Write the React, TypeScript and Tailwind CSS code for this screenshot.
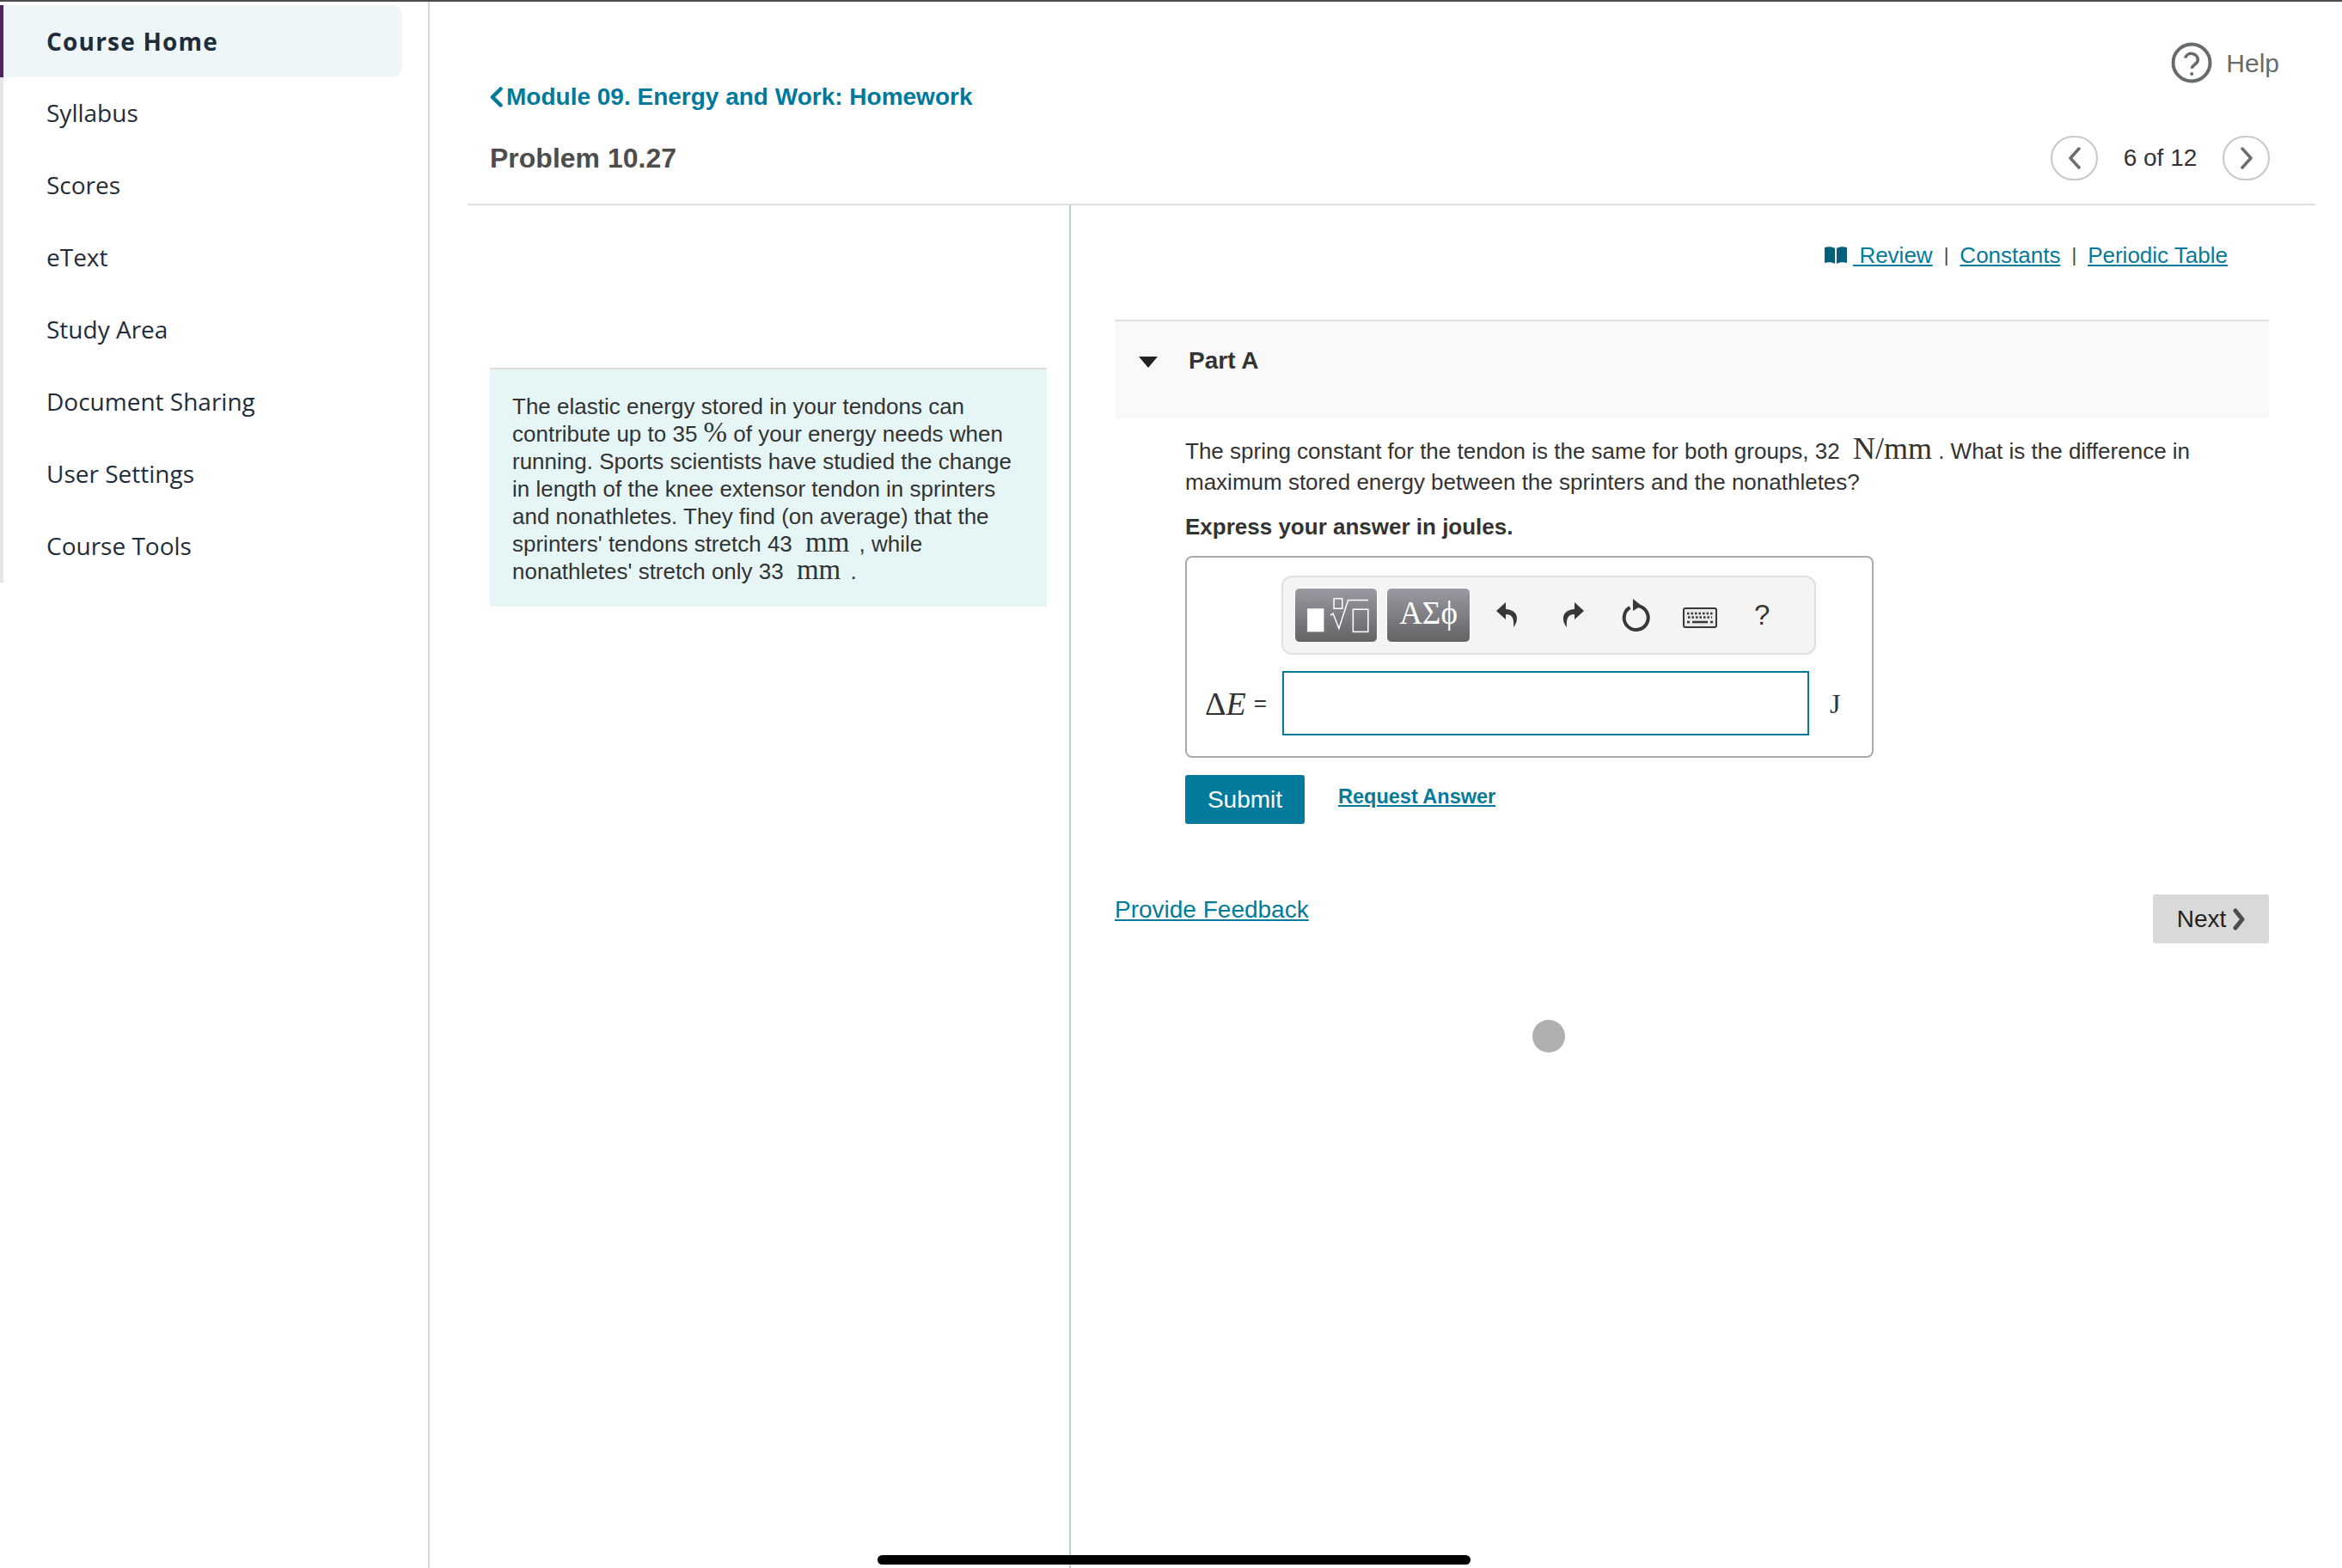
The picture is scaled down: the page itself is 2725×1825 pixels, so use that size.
const navItems = [
  "Syllabus",
  "Scores",
  "eText",
  "Study Area",
  "Document Sharing",
  "User Settings",
  "Course Tools",
];

function Mathy({ children, className = "" }: { children: React.ReactNode; className?: string }) {
  return <span className={`font-['Liberation_Serif',serif] leading-[0] ${className}`}>{children}</span>;
}

function Chevron({ dir }: { dir: "left" | "right" }) {
  return (
    <svg width="18" height="26" viewBox="0 0 18 26" fill="none" stroke="#6a6e70" strokeWidth="3.5" strokeLinecap="round" strokeLinejoin="round">
      <path d={dir === "left" ? "M14 2 4 13l10 11" : "M4 2l10 11L4 24"} />
    </svg>
  );
}

function Sidebar() {
  return (
    <aside className="w-[500px] shrink-0 border-r-2 border-[#d8d8d8] font-['Open_Sans',sans-serif] text-[#1f2d3a]">
      <div className="w-[468px] pt-1">
        <div className="flex h-[84px] items-center rounded-r-xl border-l-4 border-[#54235f] bg-[#eef6f9] pl-[50px] text-[28px] font-bold tracking-[1.2px]">
          Course Home
        </div>
        <nav className="border-l-4 border-[#e5e5ea]">
          {navItems.map((item) => (
            <div key={item} className="flex h-[84px] items-center pb-[3px] pl-[50px] text-[28px]">
              {item}
            </div>
          ))}
        </nav>
      </div>
    </aside>
  );
}

function Header() {
  return (
    <header className="flex h-[237px] justify-between border-b-2 border-[#e0e0e0]">
      <div className="pl-[26px] pt-[95px]">
        <a className="flex h-8 items-center gap-1 text-[28px] font-bold text-[#007a9c]">
          <svg width="15" height="24" viewBox="0 0 15 24" fill="none" stroke="#007a9c" strokeWidth="4.5" strokeLinecap="round" strokeLinejoin="round">
            <path d="M12.500 2.500 3 12l9.500 9.500" />
          </svg>
          Module 09. Energy and Work: Homework
        </a>
        <h1 className="mt-[35px] text-[32px] leading-10 font-bold text-[#4d4d4d]">Problem 10.27</h1>
      </div>
      <div className="flex flex-col items-end pt-[47px]">
        <div className="flex h-12 items-center gap-4 pr-[42px] text-[30px] text-[#666b6d]">
          <svg width="48" height="48" viewBox="0 0 48 48" fill="none" stroke="#666b6d" strokeWidth="4">
            <circle cx="24" cy="24" r="21.5" />
            <path d="M16.500 18.500a7.600 7.600 0 0 1 14.800 2.300c0 5-7 5.600-7 10" strokeWidth="3.600" />
            <circle cx="24.200" cy="37" r="2" fill="#666b6d" stroke="none" />
          </svg>
          Help
        </div>
        <div className="mt-[61px] flex items-center pr-[53px]">
          <button className="flex h-[52px] w-[55px] items-center justify-center rounded-full border-2 border-[#c8c8c8]">
            <Chevron dir="left" />
          </button>
          <span className="w-[145px] text-center text-[28px] text-[#333]">6 of 12</span>
          <button className="flex h-[52px] w-[55px] items-center justify-center rounded-full border-2 border-[#c8c8c8]">
            <Chevron dir="right" />
          </button>
        </div>
      </div>
    </header>
  );
}

function ProblemIntro() {
  return (
    <section className="w-[700px] shrink-0 pl-[26px] pr-[26px] pt-[189px]">
      <div className="h-[278px] border-t-2 border-[#dfdfe2] bg-[#e6f6f6] px-[26px] pt-[27px] text-[26px] leading-8 text-[#333]">
        The elastic energy stored in your tendons can
        <br />
        contribute up to 35 <Mathy className="text-[33px]">%</Mathy> of your energy needs when
        <br />
        running. Sports scientists have studied the change
        <br />
        in length of the knee extensor tendon in sprinters
        <br />
        and nonathletes. They find (on average) that the
        <br />
        sprinters' tendons stretch 43 <Mathy className="ml-2 mr-1 text-[33px]">mm</Mathy> , while
        <br />
        nonathletes' stretch only 33 <Mathy className="ml-2 mr-1 text-[33px]">mm</Mathy> .
      </div>
    </section>
  );
}

function Toolbar() {
  return (
    <div className="ml-[110px] flex h-[92px] w-[622px] items-center rounded-xl border-2 border-[#e0e0e0] bg-[#f4f4f4] pl-[13px]">
      <button className="h-[64px] w-[97px] rounded-md border border-white bg-gradient-to-b from-[#9b99a2] to-[#646466]">
        <svg width="95" height="62" viewBox="0 0 97 64" fill="none" stroke="#fff" strokeWidth="1.600">
          <rect x="14" y="24" width="20" height="28" fill="#fff" stroke="none" />
          <rect x="46" y="12" width="10" height="12" />
          <path d="M42 32l3-2 7 18 11-34h24" />
          <rect x="69" y="25" width="18" height="27" />
        </svg>
      </button>
      <button className="ml-[10px] flex h-[64px] w-[98px] items-center justify-center rounded-md border border-white bg-gradient-to-b from-[#9b99a2] to-[#646466] pb-1 font-['Liberation_Serif',serif] text-[37px] text-white">
        ΑΣϕ
      </button>
      {/* undo, redo */}
      <svg className="ml-[29px]" width="28" height="32" viewBox="0 0 28 32" fill="#383838">
        <path d="M12 1 1 11l11 10v-6c7 0 10 4 9 15 6-7 7-20-9-21z" />
      </svg>
      <svg className="ml-[48px]" width="28" height="32" viewBox="0 0 28 32" fill="#383838">
        <path d="M16 1l11 10-11 10v-6c-7 0-10 4-9 15-6-7-7-20 9-21z" />
      </svg>
      {/* reset */}
      <svg className="ml-[43px]" width="34" height="38" viewBox="0 0 34 38" fill="none" stroke="#383838" strokeWidth="4">
        <path d="M20 8.400A14 14 0 1 1 9.500 10" />
        <path d="M13 0l10 8-10 6z" fill="#383838" stroke="none" />
      </svg>
      {/* keyboard */}
      <svg className="ml-[37px] mt-[6px]" width="40" height="24" viewBox="0 0 40 24" fill="none">
        <rect x="1" y="1" width="38" height="22" rx="2" fill="#e8e8e8" stroke="#383838" strokeWidth="2" />
        <path d="M5 7h30M6 11.500h28" stroke="#383838" strokeWidth="2.500" strokeDasharray="2.500 2" />
        <path d="M5 17h3M11 17h18M32 17h3" stroke="#383838" strokeWidth="2.500" />
      </svg>
      <span className="ml-[43px] text-[33px] text-[#383838]">?</span>
    </div>
  );
}

function AnswerBox() {
  return (
    <div className="mt-4 h-[235px] w-[801px] rounded-lg border-2 border-[#aaa] pt-[21px]">
      <Toolbar />
      <div className="mt-[19px] flex items-center">
        <span className="flex w-[111px] items-center whitespace-nowrap pl-[21px] text-[#333]">
          <Mathy className="text-[38px]">
            Δ<i>E</i>
          </Mathy>
          <span className="ml-[9px] text-[26px]">=</span>
        </span>
        <div className="h-[75px] w-[613px] border-2 border-[#047a9c]" />
        <Mathy className="ml-6 text-[32px] text-[#333]">J</Mathy>
      </div>
    </div>
  );
}

function PartA() {
  return (
    <section className="w-[1343px]">
      <div className="flex h-[115px] items-start gap-[36px] border-t-2 border-[#e0e0e0] bg-[#f9f9f9] pl-[28px] pt-[28px]">
        <svg className="mt-[13px]" width="22" height="13" viewBox="0 0 22 13" fill="#222">
          <path d="M0 0h22L11 13z" />
        </svg>
        <h2 className="text-[28px] leading-9 font-bold text-[#333]">Part A</h2>
      </div>
      <div className="pl-[82px]">
        <p className="mt-5 text-[26px] leading-9 text-[#333]">
          The spring constant for the tendon is the same for both groups, 32{" "}
          <Mathy className="ml-2 text-[36px]">N/mm</Mathy> . What is the difference in
          <br />
          maximum stored energy between the sprinters and the nonathletes?
        </p>
        <p className="mt-4 text-[26px] leading-9 font-bold text-[#333]">Express your answer in joules.</p>
        <AnswerBox />
        <div className="mt-5 flex items-start">
          <button className="h-[57px] w-[139px] rounded-[3px] bg-[#047a9c] text-[28px] text-white">Submit</button>
          <a className="ml-[39px] mt-[9px] text-[23.500px] leading-8 font-bold text-[#047a9c] underline">Request Answer</a>
        </div>
      </div>
      <div className="mt-[82px] flex items-start justify-between">
        <a className="text-[28px] leading-9 text-[#047a9c] underline">Provide Feedback</a>
        <button className="flex h-[57px] w-[135px] items-center justify-center gap-2 rounded-[3px] bg-[#d9d9d9] text-[28px] text-[#222]">
          Next
          <svg width="14" height="26" viewBox="0 0 14 26" fill="none" stroke="#4d4d4d" strokeWidth="5" strokeLinecap="round" strokeLinejoin="round">
            <path d="M3 3l8 10-8 10" />
          </svg>
        </button>
      </div>
    </section>
  );
}

export default function App() {
  return (
    <div className="relative flex h-[1825px] w-[2725px] overflow-hidden border-t-2 border-[#4d4d4d] bg-white font-['Liberation_Sans',sans-serif]">
      <Sidebar />
      <main className="flex min-w-0 flex-1 flex-col pl-[44px] pr-[31px]">
        <Header />
        <div className="flex flex-1">
          <ProblemIntro />
          <section className="flex-1 border-l-2 border-[#b9cfe0] pl-[51px]">
            <div className="flex h-[133px] justify-end pr-[102px] pt-[42px] text-[26px] leading-8 text-[#047a9c]">
              <svg className="mr-[7px] mt-[6px]" width="26" height="20" viewBox="0 0 26 20" fill="#045f7a">
                <path d="M0 1c4-1 9-1 12 1v18c-3-2-8-2-12-1zM26 1c-4-1-9-1-12 1v18c3-2 8-2 12-1z" />
              </svg>
              <a className="whitespace-pre underline"> Review</a>
              <span className="mx-[13px] text-[22px] text-[#444]">|</span>
              <a className="underline">Constants</a>
              <span className="mx-[13px] text-[22px] text-[#444]">|</span>
              <a className="underline">Periodic Table</a>
            </div>
            <PartA />
          </section>
        </div>
      </main>
      {/* loading dot and home indicator sit over the page */}
      <div className="absolute left-[1783px] top-[1185px] size-[38px] rounded-full bg-[#b0b0b0]" />
      <div className="absolute left-[1021px] top-[1808px] h-[11px] w-[690px] rounded-full bg-black" />
    </div>
  );
}
